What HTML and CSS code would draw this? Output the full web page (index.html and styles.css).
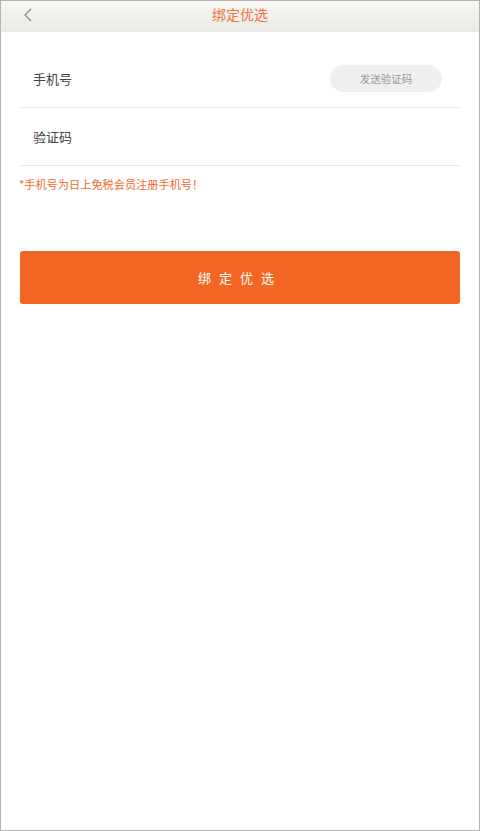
FILE: index.html
```html
<!DOCTYPE html>
<html lang="zh">
<head>
<meta charset="utf-8">
<title>绑定优选</title>
<link rel="stylesheet" href="styles.css">
</head>
<body>
<div class="frame">
  <header class="topbar">
    <span class="back">
      <svg width="10" height="14" viewBox="0 0 10 14"><path d="M8 1 L2 7 L8 13" fill="none" stroke="#8a8a8a" stroke-width="1.3"/></svg>
    </span>
    <h1 class="title">绑定优选</h1>
  </header>
  <main class="content">
    <div class="form">
      <div class="row">
        <span class="label">手机号</span>
        <span class="send">发送验证码</span>
      </div>
      <div class="row">
        <span class="label">验证码</span>
      </div>
    </div>
    <p class="note">*手机号为日上免税会员注册手机号！</p>
    <div class="submit">绑定优选</div>
  </main>
</div>
</body>
</html>
```
FILE: styles.css
```css
html, body {
  margin: 0;
  padding: 0;
  background: #fff;
}
body {
  font-family: "Noto Sans CJK SC", "Noto Sans", sans-serif;
}
.frame {
  box-sizing: border-box;
  width: 480px;
  height: 831px;
  border: 1px solid #b4b4b4;
  background: #fff;
  overflow: hidden;
}
.topbar {
  position: relative;
  height: 31px;
  background: linear-gradient(to bottom, #f7f7f5, #ebe9e3);
  display: flex;
  align-items: center;
  justify-content: center;
}
.back {
  position: absolute;
  left: 22px;
  top: 7px;
  display: flex;
}
.title {
  margin: 0;
  font-size: 14px;
  font-weight: normal;
  color: #ef7437;
  line-height: 1;
  margin-top: -6px;
}
.content {
  padding: 0 19px 0 19px;
}
.form {
  margin-top: 18px;
}
.row {
  height: 57px;
  border-bottom: 1px solid #e9e9e9;
  display: flex;
  align-items: center;
  justify-content: space-between;
  padding: 0 18px 0 13px;
}
.label {
  font-size: 13px;
  color: #444;
}
.send {
  width: 112px;
  height: 27px;
  border-radius: 14px;
  background: #f0eff0;
  color: #9a9a9a;
  font-size: 10.5px;
  display: flex;
  align-items: center;
  justify-content: center;
}
.note {
  margin: 10px 0 0 -1px;
  font-size: 11.2px;
  color: #ee6a2c;
  line-height: 16px;
}
.submit {
  margin: 59px 0 0 0;
  height: 53px;
  border-radius: 3px;
  background: #f26522;
  color: #fff;
  font-size: 13px;
  letter-spacing: 8px;
  display: flex;
  align-items: center;
  justify-content: center;
}
```
